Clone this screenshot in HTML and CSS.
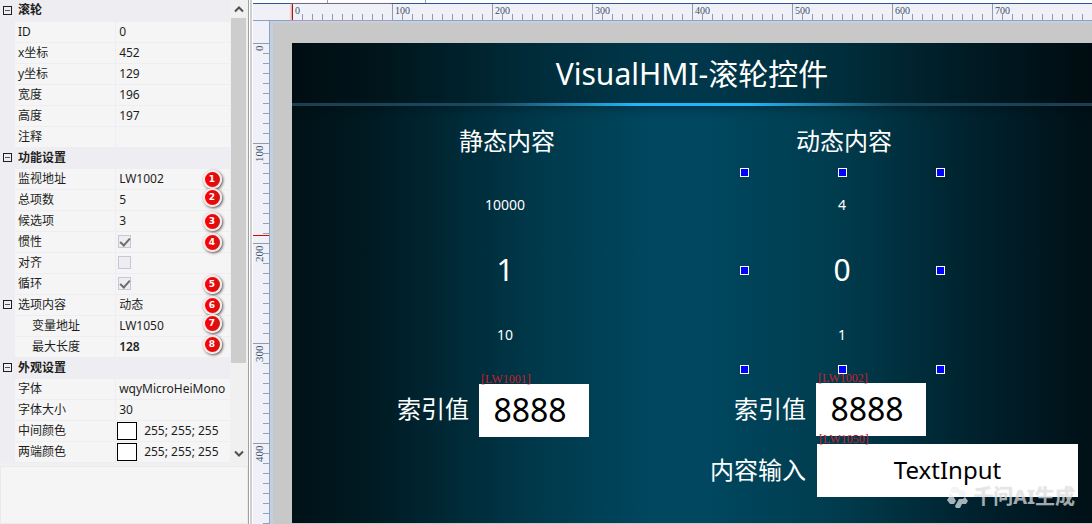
FILE: index.html
```
<!DOCTYPE html>
<html lang="zh-CN">
<head>
    <meta charset="UTF-8">
    <meta name="viewport" content="width=device-width, initial-scale=1.0">
    <title>VisualHMI - 滚轮控件</title>
    <link rel="stylesheet" href="styles.css">
</head>
<body>
    <!-- 属性面板 -->
    <aside class="panel">
        <div class="grid-wrapper">
            <table class="props">
                <tbody>
                    <tr class="group"><td class="gutter"><button class="toggle" aria-label="折叠滚轮"></button></td><th colspan="2">滚轮</th></tr>
                    <tr><td class="gutter"></td><th>ID</th><td>0</td></tr>
                    <tr><td class="gutter"></td><th>x坐标</th><td>452</td></tr>
                    <tr><td class="gutter"></td><th>y坐标</th><td>129</td></tr>
                    <tr><td class="gutter"></td><th>宽度</th><td>196</td></tr>
                    <tr><td class="gutter"></td><th>高度</th><td>197</td></tr>
                    <tr><td class="gutter"></td><th>注释</th><td></td></tr>
                    <tr class="group"><td class="gutter"><button class="toggle" aria-label="折叠功能设置"></button></td><th colspan="2">功能设置</th></tr>
                    <tr><td class="gutter"></td><th>监视地址</th><td>LW1002<span class="mark">1</span></td></tr>
                    <tr><td class="gutter"></td><th>总项数</th><td>5<span class="mark high">2</span></td></tr>
                    <tr><td class="gutter"></td><th>候选项</th><td>3<span class="mark">3</span></td></tr>
                    <tr><td class="gutter"></td><th><label for="inertia">惯性</label></th><td><input type="checkbox" id="inertia" checked><span class="mark">4</span></td></tr>
                    <tr><td class="gutter"></td><th><label for="align">对齐</label></th><td><input type="checkbox" id="align"></td></tr>
                    <tr><td class="gutter"></td><th><label for="loop">循环</label></th><td><input type="checkbox" id="loop" checked><span class="mark">5</span></td></tr>
                    <tr><td class="gutter"><button class="toggle" aria-label="折叠选项内容"></button></td><th>选项内容</th><td>动态<span class="mark">6</span></td></tr>
                    <tr class="child"><td class="gutter"></td><th>变量地址</th><td>LW1050<span class="mark high">7</span></td></tr>
                    <tr class="child"><td class="gutter"></td><th>最大长度</th><td class="changed">128<span class="mark high">8</span></td></tr>
                    <tr class="group"><td class="gutter"><button class="toggle" aria-label="折叠外观设置"></button></td><th colspan="2">外观设置</th></tr>
                    <tr><td class="gutter"></td><th>字体</th><td>wqyMicroHeiMono</td></tr>
                    <tr><td class="gutter"></td><th>字体大小</th><td>30</td></tr>
                    <tr><td class="gutter"></td><th>中间颜色</th><td><span class="color"><i class="swatch"></i>255; 255; 255</span></td></tr>
                    <tr><td class="gutter"></td><th>两端颜色</th><td><span class="color"><i class="swatch"></i>255; 255; 255</span></td></tr>
                </tbody>
            </table>
            <div class="scrollbar">
                <button aria-label="向上"><svg width="10" height="8" viewBox="0 0 10 8"><path d="M1 6.5 5 2.5 9 6.5"/></svg></button>
                <div class="thumb"></div>
                <button aria-label="向下"><svg width="10" height="8" viewBox="0 0 10 8"><path d="M1 1.5 5 5.5 9 1.5"/></svg></button>
            </div>
        </div>
        <div class="description"></div>
    </aside>

    <!-- 编辑区 -->
    <main class="editor">
        <div class="tabs"><span class="tab"></span><span class="tab"></span></div>
        <div class="ruler-x">
            <span>0</span><span>100</span><span>200</span><span>300</span><span>400</span><span>500</span><span>600</span><span>700</span>
        </div>
        <div class="workspace">
            <div class="ruler-y">
                <span>0</span><span>100</span><span>200</span><span>300</span><span>400</span>
                <i class="cursor"></i>
            </div>
            <div class="stage">
                <!-- 800x480 画面，控件按坐标摆放 -->
                <div class="screen">
                    <header class="title">VisualHMI-滚轮控件</header>

                    <div class="item text static-title">静态内容</div>
                    <div class="item text dynamic-title">动态内容</div>

                    <div class="item wheel static-wheel"><span>10000</span><span class="current">1</span><span>10</span></div>
                    <div class="item wheel dynamic-wheel">
                        <span>4</span><span class="current">0</span><span>1</span>
                        <i class="handle nw"></i><i class="handle n"></i><i class="handle ne"></i>
                        <i class="handle w"></i><i class="handle e"></i>
                        <i class="handle sw"></i><i class="handle s"></i><i class="handle se"></i>
                    </div>

                    <label class="item text index-label-1" for="index1">索引值</label>
                    <div class="item field index-1"><span class="address">[LW1001]</span><input type="text" id="index1" value="8888"></div>

                    <label class="item text index-label-2" for="index2">索引值</label>
                    <div class="item field index-2"><span class="address">[LW1002]</span><input type="text" id="index2" value="8888"></div>

                    <label class="item text content-label" for="content">内容输入</label>
                    <div class="item field content"><span class="address">[LW1050]</span><input type="text" id="content" value="TextInput"></div>
                </div>
            </div>
        </div>
        <div class="watermark">
            <svg width="24" height="24" viewBox="0 0 24 24">
                <path d="M6 2h6l2 3h4l2 4-2 3h-4l-2-4H7L4 6z"/>
                <path d="M3 8l3 1 4 7-2 3H4l-3-4 2-3z"/>
                <path d="M19 12l3 4-2 3h-4l-2 4h-4l-1-2 4-7h4z"/>
            </svg>
            千问AI生成
        </div>
    </main>
</body>
</html>
```
FILE: styles.css
```
* {
    box-sizing: border-box;
}

body {
    margin: 0;
    height: 100vh;
    display: flex;
    overflow: hidden;
    background: #d0d0d0;
    color: #1e1e1e;
    font-family: "Noto Sans", "Noto Sans CJK SC", sans-serif;
    font-size: 12px;
}

button {
    padding: 0;
    border: none;
    background: none;
}

/* 属性面板 */
.panel {
    flex: none;
    width: 249px;
    display: flex;
    flex-direction: column;
    background: #f0f0f0;
    border-right: 1px solid #a0a0a0;
    box-shadow: 1px 0 #fff;
}

.grid-wrapper {
    display: flex;
    padding-right: 2px;
}

.props {
    flex: 1;
    min-width: 0;
    table-layout: fixed;
    border-collapse: collapse;
    background: #f5f5f5;
}

.props tr {
    height: 21px;
}

.props th, .props td {
    position: relative;
    width: 114px;
    height: 21px;
    padding: 0 0 0 3px;
    border-bottom: 1px solid #eeeef2;
    line-height: 20px;
    text-align: left;
    font-weight: normal;
    white-space: nowrap;
}

.props th {
    width: 102px;
    border-right: 1px solid #eeeef2;
}

.props .gutter {
    width: 15px;
    background: #eeeef2;
}

.props .group th {
    background: #eeeef2;
    font-weight: bold;
}

.props .child th {
    padding-left: 17px;
}

.props .changed {
    font-weight: 600;
}

.toggle {
    display: block;
    width: 9px;
    height: 9px;
    border: 1px solid #1e1e1e;
    background: linear-gradient(#555, #555) center / 5px 1px no-repeat;
}

.props input {
    appearance: none;
    display: block;
    width: 13px;
    height: 13px;
    margin: 0 0 0 -1px;
    border: 1px solid #c6c8d8;
    background: #eeeef2;
}

.props input:checked::after {
    content: "";
    display: block;
    width: 8px;
    height: 4px;
    margin: 2px 1px;
    border: solid #6d6d6d;
    border-width: 0 0 2px 2px;
    transform: rotate(-48deg);
}

.color {
    display: flex;
    align-items: center;
    gap: 7px;
    margin-left: -2px;
}

.swatch {
    width: 20px;
    height: 18px;
    border: 1px solid #000;
    background: #fff;
}

/* 编号标记 */
.mark {
    position: absolute;
    top: 1px;
    right: 8px;
    width: 19px;
    height: 19px;
    border: 2px solid #fbe9e9;
    border-radius: 50%;
    background: linear-gradient(90deg, #f00, #d01414);
    box-shadow: 1px 1px 3px rgba(0, 0, 0, 0.7);
    color: #fff;
    font: bold 9px/15px "DejaVu Sans", sans-serif;
    text-align: center;
}

.mark.high {
    top: -2px;
}

.scrollbar {
    width: 15px;
    margin-left: 1px;
    display: flex;
    flex-direction: column;
}

.scrollbar button {
    height: 18px;
}

.scrollbar svg {
    display: block;
    margin: 0 auto;
    fill: none;
    stroke: #505050;
    stroke-width: 2;
}

.thumb {
    height: 345px;
    margin-bottom: auto;
    background: #cdcdcd;
}

.description {
    flex: 1;
    margin: 3px 0 0;
    border: 1px solid #eaeaea;
    background: #f5f5f5;
}

/* 编辑区 */
.editor {
    position: relative;
    flex: 1;
    min-width: 0;
    margin-left: 3px;
    display: flex;
    flex-direction: column;
    overflow: hidden;
    background: #f0f1f8;
    border-left: 1px solid #fff;
}

.tabs {
    flex: none;
    display: flex;
    height: 4px;
    background: #fff;
    border-bottom: 1px solid #2b579a;
}

.tab {
    width: 75px;
    border-right: 1px solid #a0a0a0;
}

.tab + .tab {
    width: 98px;
}

.ruler-x, .ruler-y {
    display: flex;
    color: #3b5068;
    font: 10px/11px "Liberation Serif", serif;
}

.ruler-x {
    flex: none;
    height: 17px;
    padding-left: 39px;
    border-bottom: 1px solid #8ea2ba;
    background: repeating-linear-gradient(90deg, #8e9aad 0 1px, transparent 1px 10px) 39px 10px / 100% 6px no-repeat;
}

.ruler-x span {
    flex: none;
    width: 100px;
    padding: 1px 2px;
    border-left: 1px solid #8e9aad;
}

.ruler-x span:first-child {
    border-color: #802020;
    box-shadow: -1px 0 2px #f88;
}

.workspace {
    flex: 1;
    display: flex;
    min-height: 0;
}

.ruler-y {
    position: relative;
    flex: none;
    flex-direction: column;
    width: 17px;
    padding-top: 22px;
    border-right: 1px solid #8ea2ba;
    background: repeating-linear-gradient(#8ea2ba 0 1px, transparent 1px 10px) 10px 22px / 6px 100% no-repeat;
    font-size: 11px;
    overflow: hidden;
}

.ruler-y span {
    flex: none;
    height: 100px;
    padding: 2px 1px;
    border-bottom: 1px solid #8e9aad;
    writing-mode: vertical-rl;
    transform: rotate(180deg);
    text-align: right;
}

.cursor {
    position: absolute;
    top: 214px;
    left: 0;
    width: 16px;
    height: 1px;
    background: #e00000;
}

.stage {
    flex: 1;
    min-width: 0;
    padding: 20px 0 0 19px;
    border: solid #c3cfe0;
    border-width: 2px 0 0 3px;
    background: #c8c8c8;
}

/* 画面 */
.screen {
    position: relative;
    width: 800px;
    height: 480px;
    overflow: hidden;
    background: linear-gradient(90deg, #001218 0%, #001a22 10%, #00384a 30%, #00475f 45%, #00475f 52%, #003c4e 68%, #00222e 85%, #001016 100%);
    color: #fff;
}

.title {
    height: 63px;
    padding-top: 7px;
    border-bottom: 3px solid;
    border-image: linear-gradient(90deg, #1a3f52 0%, #1a4a60 25%, #26b4f5 43%, #26b4f5 57%, #1a4a60 75%, #1a3f52 100%) 1;
    background: rgba(0, 0, 0, 0.22);
    box-shadow: 0 2px 10px rgba(0, 0, 0, 0.3);
    font-size: 30px;
    line-height: 48px;
    text-align: center;
}

.item {
    position: absolute;
}

.text {
    font-size: 24px;
    line-height: 32px;
    white-space: nowrap;
}

.static-title {
    left: 167px;
    top: 82px;
}

.dynamic-title {
    left: 504px;
    top: 82px;
}

.wheel {
    width: 196px;
    height: 197px;
    padding-bottom: 2px;
    display: grid;
    grid-template-rows: repeat(3, 1fr);
    place-items: center;
    font-size: 14px;
}

.wheel .current {
    font-size: 30px;
}

.static-wheel {
    left: 115px;
    top: 129px;
}

.dynamic-wheel {
    left: 452px;
    top: 129px;
}

.handle {
    position: absolute;
    width: 9px;
    height: 9px;
    margin: -4px;
    border: 1px solid #fff;
    background: #00f;
}

.nw, .n, .ne {
    top: 0;
}

.w, .e {
    top: 98px;
}

.sw, .s, .se {
    top: 100%;
}

.nw, .w, .sw {
    left: 0;
}

.n, .s {
    left: 50%;
}

.ne, .e, .se {
    left: 100%;
}

.field {
    width: 110px;
    height: 53px;
    background: #fff;
}

.field input {
    width: 100%;
    height: 100%;
    padding: 0 8px 3px 0;
    border: none;
    outline: none;
    background: none;
    color: #000;
    font: 32px "Noto Sans", sans-serif;
    text-align: center;
}

.address {
    position: absolute;
    top: -12px;
    left: 2px;
    color: #c8202c;
    font: 12px/14px "Liberation Serif", serif;
}

.index-label-1 {
    left: 105px;
    top: 350px;
}

.index-1 {
    left: 187px;
    top: 341px;
}

.index-label-2 {
    left: 442px;
    top: 350px;
}

.index-2 {
    left: 524px;
    top: 340px;
}

.content-label {
    left: 418px;
    top: 411px;
}

.content {
    left: 525px;
    top: 401px;
    width: 261px;
}

.content input {
    padding: 0 0 2px;
    font-size: 24px;
}

/* 水印 */
.watermark {
    position: absolute;
    right: 17px;
    bottom: 14px;
    display: flex;
    align-items: center;
    gap: 3px;
    color: rgba(238, 240, 242, 0.7);
    font-size: 20px;
    font-weight: 700;
    line-height: 26px;
    text-shadow: 0 0 1px rgba(0, 0, 0, 0.2);
}

.watermark svg {
    fill: currentColor;
}
```
